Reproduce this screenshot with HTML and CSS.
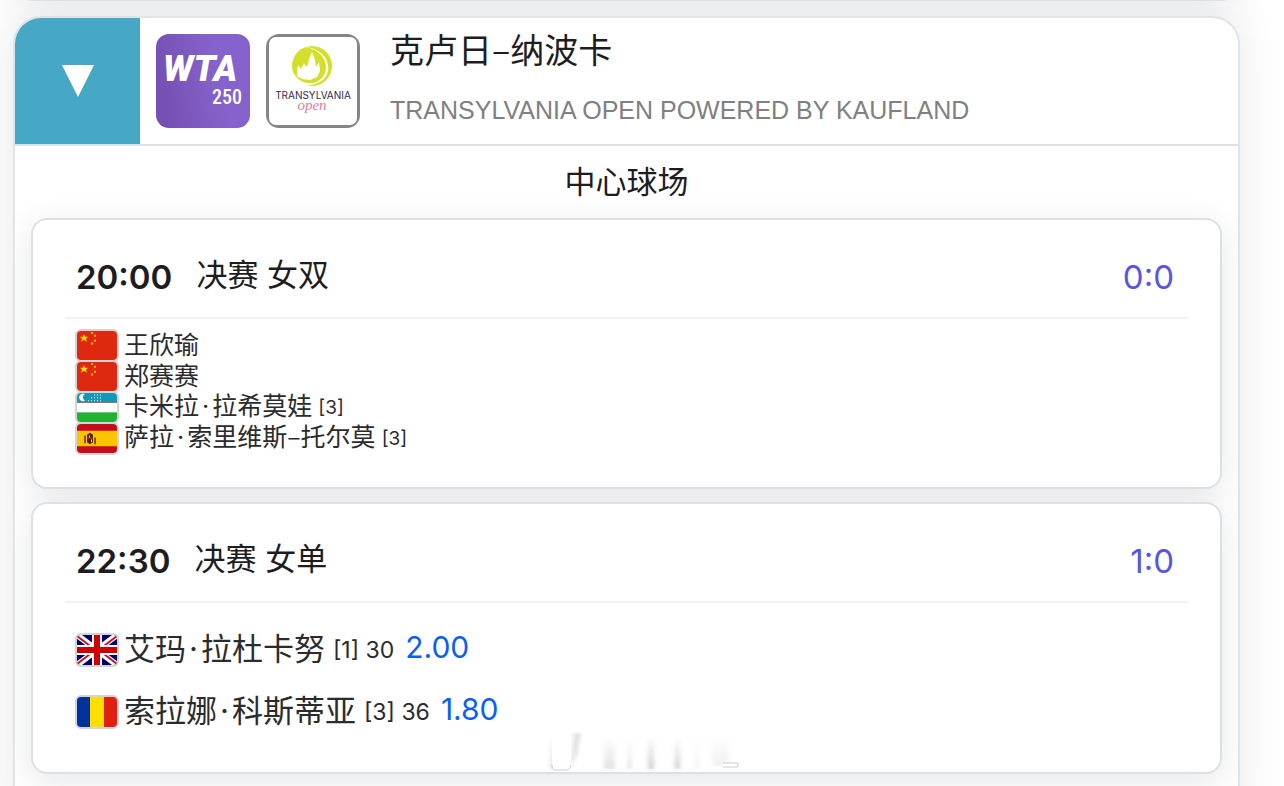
FILE: index.html
```html
<!DOCTYPE html>
<html lang="zh-CN">
<head>
  <meta charset="UTF-8">
  <meta name="viewport" content="width=device-width, initial-scale=1.0">
  <title>克卢日–纳波卡</title>
  <link rel="stylesheet" href="styles.css">
</head>
<body>
  <div class="panel panel-previous"></div>

  <section class="panel">
    <header class="tour-header">
      <button class="toggle" type="button" aria-label="收起">
        <svg width="32" height="32" viewBox="0 0 32 32"><path d="M0 0H32L16 32Z" fill="#fff"/></svg>
      </button>
      <div class="logos">
        <svg class="logo" viewBox="0 0 94 94">
          <defs>
            <linearGradient id="wta" x1="0" y1="0.2" x2="1" y2="0">
              <stop offset="0" stop-color="#7650b4"/>
              <stop offset="0.6" stop-color="#8663cc"/>
              <stop offset="1" stop-color="#8360cb"/>
            </linearGradient>
          </defs>
          <rect width="94" height="94" rx="13" fill="url(#wta)"/>
          <text class="wta-name" x="7" y="47">WTA</text>
          <text class="wta-level" x="86" y="70" text-anchor="end">250</text>
        </svg>
        <svg class="logo" viewBox="0 0 94 94">
          <rect width="94" height="94" rx="13" fill="#858585"/>
          <rect x="3" y="3" width="88" height="88" rx="7" fill="#fff"/>
          <circle cx="46" cy="32" r="20" fill="#d3df2b"/>
          <path d="M37 13C51 14 60 23 60 33C60 44 50 51 41 49C35 48 30 44 27 38C29 50 38 53 45 51C56 49 64 42 62 31C60 20 50 13 37 13Z" fill="#fff"/>
          <path d="M31 42V34L33 31L34 35L36 33L38 29L40 33L42 30L43 25L46 18L49 26L50 33L53 28L54 37L51 43L44 46L36 45Z" fill="#fff"/>
          <text class="open-name" x="47" y="65" text-anchor="middle">TRANSYLVANIA</text>
          <text class="open-script" x="46" y="76" text-anchor="middle">open</text>
        </svg>
      </div>
      <div class="tour-title">
        <h1>克卢日–纳波卡</h1>
        <p>TRANSYLVANIA OPEN POWERED BY KAUFLAND</p>
      </div>
    </header>

    <h2 class="court">中心球场</h2>

    <div class="matches">
      <article class="match">
        <div class="match-header">
          <time>20:00</time>
          <span class="round">决赛 女双</span>
          <span class="score">0:0</span>
        </div>
        <ul class="players doubles">
          <li>
            <svg class="flag" viewBox="0 0 40 30" preserveAspectRatio="none"><use href="#flag-cn"/></svg>
            <span class="name">王欣瑜</span>
          </li>
          <li>
            <svg class="flag" viewBox="0 0 40 30" preserveAspectRatio="none"><use href="#flag-cn"/></svg>
            <span class="name">郑赛赛</span>
          </li>
          <li>
            <svg class="flag" viewBox="0 0 40 30" preserveAspectRatio="none">
              <rect width="40" height="30" fill="#fff"/>
              <rect width="40" height="10" fill="#1299b8"/>
              <rect y="9" width="40" height="1" fill="#a0525c"/>
              <rect y="20" width="40" height="10" fill="#24b035"/>
              <path d="M8 1A4 4 0 1 0 8 8A4 4 0 0 1 8 1Z" fill="#fff"/>
              <g stroke="#fff" stroke-width="1" stroke-dasharray="1 2">
                <path d="M17 2H24M14 5H24M11 8H24"/>
              </g>
            </svg>
            <span class="name">卡米拉<span class="dot">·</span>拉希莫娃</span>
            <span class="seed">[3]</span>
          </li>
          <li>
            <svg class="flag" viewBox="0 0 40 30" preserveAspectRatio="none">
              <rect width="40" height="30" fill="#c60b1e"/>
              <rect y="7" width="40" height="16" fill="#ffc400"/>
              <path d="M10 11L13 9L16 11V19L13 21L10 19Z" fill="#5c1a14"/>
              <path d="M7 12H9V20H7ZM17 14H19V21H17ZM10 14H16V15H10Z" fill="#8c5318"/>
              <path d="M12 12H13V14H12ZM14 16H15V19H14Z" fill="#f0d9b0"/>
            </svg>
            <span class="name">萨拉<span class="dot">·</span>索里维斯–托尔莫</span>
            <span class="seed">[3]</span>
          </li>
        </ul>
      </article>

      <article class="match">
        <div class="match-header">
          <time>22:30</time>
          <span class="round">决赛 女单</span>
          <span class="score">1:0</span>
        </div>
        <ul class="players singles">
          <li>
            <svg class="flag" viewBox="0 0 40 30" preserveAspectRatio="none">
              <rect width="40" height="30" fill="#006"/>
              <path d="M0 0L40 30M40 0L0 30" stroke="#fff" stroke-width="6"/>
              <path d="M0 1L17 14M40 1L23 14M0 29L17 16M40 29L23 16" stroke="#c8102e" stroke-width="2"/>
              <path d="M20 0V30M0 15H40" stroke="#fff" stroke-width="10"/>
              <path d="M20 0V30M0 15H40" stroke="#c00" stroke-width="6"/>
            </svg>
            <span class="name">艾玛<span class="dot">·</span>拉杜卡努</span>
            <span class="seed">[1] 30</span>
            <span class="odds">2.00</span>
          </li>
          <li>
            <svg class="flag" viewBox="0 0 40 30" preserveAspectRatio="none">
              <rect width="14" height="30" fill="#00319c"/>
              <rect x="13" width="14" height="30" fill="#ffde00"/>
              <rect x="27" width="13" height="30" fill="#de2110"/>
            </svg>
            <span class="name">索拉娜<span class="dot">·</span>科斯蒂亚</span>
            <span class="seed">[3] 36</span>
            <span class="odds">1.80</span>
          </li>
        </ul>
        <svg class="mark" width="200" height="42" viewBox="0 0 200 42" aria-hidden="true">
          <defs>
            <filter id="soft"><feGaussianBlur stdDeviation="2 1"/></filter>
            <linearGradient id="fade" x1="0" y1="0" x2="0" y2="1">
              <stop offset="0" stop-color="#888" stop-opacity="0.02"/>
              <stop offset="1" stop-color="#888" stop-opacity="0.4"/>
            </linearGradient>
          </defs>
          <g filter="url(#soft)" fill="url(#fade)">
            <path d="M12 6H15V39H12Z"/>
            <path d="M65 8H76V39H65Z" opacity="0.6"/>
            <path d="M89 8H92V39H89Z" opacity="0.7"/>
            <path d="M109 8H115V39H109Z"/>
            <path d="M136 8H141V39H136Z"/>
            <path d="M157 8H159V39H157Z" opacity="0.5"/>
            <path d="M173 8H190V36H173Z" opacity="0.3"/>
          </g>
          <path d="M35 3H42L38 24L32 38Z" fill="#999" opacity="0.3" filter="url(#soft)"/>
          <path d="M13 6H32V36Q31 40 27 40H17Q13 40 13 36Z" fill="#fff"/>
          <path d="M13 35Q13 40 17 40H27Q31 40 32 35" fill="none" stroke="#ccc"/>
          <path d="M184 33H199V37H184" fill="#fff" stroke="#ccc"/>
        </svg>
      </article>
    </div>
  </section>

  <svg class="symbols" aria-hidden="true">
    <symbol id="flag-cn" viewBox="0 0 40 30">
      <rect width="40" height="30" fill="#de2910"/>
      <path d="M7 3L8 6H11L9 8L10 11L7 9L4 11L5 8L3 6H6Z" fill="#ffde00"/>
      <path d="M14 1H16V3H14ZM17 4H19V6H17ZM17 9H19V11H17ZM14 12H16V14H14Z" fill="#ffb800"/>
    </symbol>
  </svg>
</body>
</html>
```
FILE: styles.css
```css
* {
  box-sizing: border-box;
}

html {
  overflow: hidden;
}

body {
  margin: 0;
  padding: 0 44px 0 13px;
  background-color: #fff;
  color: #1d1d1f;
  font-family: Inter, "Noto Sans CJK SC", sans-serif;
}

h1, h2, p, ul {
  margin: 0;
  padding: 0;
  font-weight: 400;
}

ul {
  list-style: none;
}

.panel {
  margin-bottom: 15px;
  padding-bottom: 48px;
  background-color: #fff;
  border: 2px solid #dee4eb;
  border-radius: 28px;
  box-shadow: 0 0 40px rgba(50, 60, 75, 0.12);
  overflow: hidden;
}

/* tail of the tournament above */
.panel-previous {
  height: 40px;
  margin-top: -39px;
  padding: 0;
}

.tour-header {
  display: flex;
  align-items: center;
  border-bottom: 2px solid #dfe2e6;
}

.toggle {
  display: flex;
  align-items: center;
  justify-content: center;
  align-self: stretch;
  width: 125px;
  padding: 0;
  border: 0;
  background-color: #47a8c5;
  cursor: pointer;
}

.logos {
  display: flex;
  gap: 16px;
  padding: 16px;
}

.logo {
  width: 94px;
  height: 94px;
}

.wta-name {
  font: italic 900 36px Roboto, sans-serif;
  fill: #fff;
}

.wta-level {
  font: 500 20px "Liberation Sans Narrow", "Roboto Condensed", Roboto, sans-serif;
  fill: #fff;
}

.open-name {
  font: 400 10px Inter, sans-serif;
  fill: #302a55;
}

.open-script {
  font: italic 15px "Liberation Serif", serif;
  fill: #d9809c;
}

.tour-title {
  align-self: flex-start;
  padding-left: 14px;
}

.tour-title h1 {
  font-family: "Noto Sans CJK SC", sans-serif;
  font-size: 34px;
  line-height: 62px;
}

.tour-title p {
  color: #808080;
  font-family: "Liberation Sans", sans-serif;
  font-size: 25px;
  line-height: 60px;
}

.court {
  font-size: 31px;
  line-height: 72px;
  text-align: center;
}

.matches {
  display: flex;
  flex-direction: column;
  gap: 13px;
  padding: 0 16px;
}

.match {
  position: relative;
  padding: 0 32px;
  background-color: #fff;
  border: 2px solid #dde1e7;
  border-radius: 16px;
  box-shadow: 0 8px 32px rgba(50, 60, 75, 0.12);
}

.match-header {
  display: flex;
  align-items: center;
  height: 99px;
  padding: 16px 14px 0 11px;
  border-bottom: 2px solid #f2f3f4;
}

.match-header time {
  font-size: 33px;
  font-weight: 600;
}

.round {
  margin-left: 24px;
  padding-bottom: 8px;
  font-size: 31px;
}

.score {
  margin-left: auto;
  color: #5856e0;
  font-size: 33px;
}

.players {
  color: #2b2b2d;
}

.players li {
  display: flex;
  align-items: center;
  padding-left: 10px;
}

.doubles {
  padding: 11px 0 33px;
}

.singles {
  padding: 16px 0 29px;
}

.flag {
  width: 44px;
  height: 34px;
  margin-right: 5px;
  border: 2px solid #d4d4d6;
  border-radius: 6px;
}

.name {
  padding-bottom: 4px;
  font-family: "Noto Sans CJK SC", sans-serif;
}

.dot {
  padding: 0 3px;
  font-family: Inter, sans-serif;
}

.doubles li {
  height: 31px;
  font-size: 25px;
  line-height: 27px;
}

.doubles .flag {
  height: 33px;
}

.singles li {
  height: 62px;
  font-size: 31px;
}

.singles .name {
  padding-bottom: 8px;
}

.seed {
  margin-left: 6px;
  font-size: 19px;
}

.singles .seed {
  margin-left: 8px;
  font-size: 23px;
}

.odds {
  margin-left: 11px;
  padding-bottom: 6px;
  color: #0a60f0;
  font-size: 30px;
}

.mark {
  position: absolute;
  bottom: 0;
  left: 50%;
  margin-left: -88px;
}

.symbols {
  display: none;
}
```
